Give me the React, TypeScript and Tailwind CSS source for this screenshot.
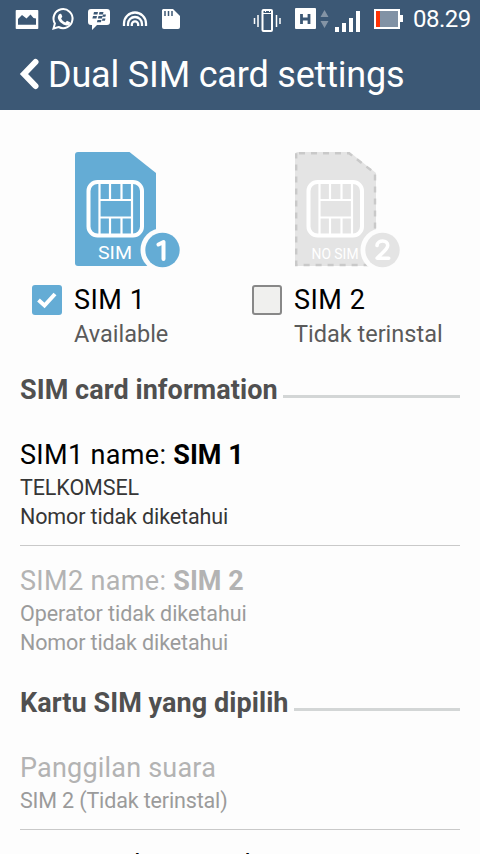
import type { ReactNode } from "react";

const statusIcons = (
  <svg width="190" height="38" viewBox="0 0 190 38" fill="#fff">
    <path fillRule="evenodd" d="M16.500 10h21q.8 0 .8.800v17.400q0 .8-.8.800h-21q-.8 0-.8-.8V10.800q0-.8.800-.8zM18 24.800h18V18.500l-2.500-.5-3-3.500-4 4-4.500-3.500-4 4z" />
    <path d="M53.500 28.500l1.400-5a9.500 9.500 0 1 1 3.700 3.500z" fill="none" stroke="#fff" strokeWidth="2" />
    <path d="M58.500 15c1.500-2 2.800-1.400 3.300.2l.5 1.500-1.200 1.700c1 2 2.400 3.200 4.300 4l1.600-1.600 3 1.500c.3 3-3 3.600-5.300 2.800-3.500-1.300-7-5-6.900-8z" />
    <path d="M91 9h16q3 0 3 3v10q0 3-3 3h-10l-5 5v-5h-1q-3 0-3-3V12q0-3 3-3z" />
    <g fill="#3c5875">
      <path d="M94 12h4l-.6 2.500h-4zM99.500 12h4l-.6 2.500h-4zM93 16h4l-.6 2.500h-4zM98.500 16h4l-.6 2.500h-4zM97.500 20h4l-.6 2.300h-4zM103 14.500h3l-.6 2.300h-3zM102.500 18.500h3l-.6 2.300h-3z" />
    </g>
    <g fill="none" stroke="#fff" strokeWidth="2.300">
      <path d="M124 26v-2.500a11 11 0 0 1 22 0V26M128 26v-2a7 7 0 0 1 14 0v2M131.800 26v-1.500a3.200 3.200 0 0 1 6.400 0V26" />
    </g>
    <path d="M163 9h10l7 7v11q0 2-2 2h-14q-2 0-2-2V10z" />
    <path d="M165 11v5M168.500 11v5M172 11v5" stroke="#3c5875" strokeWidth="1.500" />
  </svg>
);

const radioIcons = (
  <svg width="160" height="38" viewBox="250 0 160 38" fill="#fff">
    <rect x="262.500" y="10" width="9.500" height="21" rx="1" fill="none" stroke="#fff" strokeWidth="2" />
    <path d="M263 13.500h9M265.500 9v3M269.500 9v3" fill="none" stroke="#fff" />
    <path d="M254.500 18v6M258 15v12M276.500 15v12M280 18v6" stroke="#fff" strokeWidth="1.500" />
    <rect x="295" y="8" width="21" height="21" rx="1" />
    <path d="M301.500 14v10M309 14v10M301.500 19h7.500" stroke="#3c5875" strokeWidth="2.800" />
    <path d="M320.500 17l4-7 4 7zM320.500 21h8l-4 7z" fill="#8494a5" />
    <path d="M335 27h4v5h-4zM342 23h4v9h-4zM349 18h4v14h-4zM356 11h4v21h-4z" />
    <path d="M374 9h26v6h3v7h-3v7h-26z" />
    <path d="M376 11h22v16h-22z" fill="#8192a5" />
    <path d="M376 11h4v16h-4z" fill="#ff3305" />
  </svg>
);

type SimProps = { slot: 1 | 2; available?: boolean };

const SimCard = ({ slot, available }: SimProps) => {
  const color = available ? "#64acd5" : "#e4e4e4";

  return (
    <svg width="108" height="120" viewBox="0 0 108 120" className="block">
      <path d="M3 0h51.500l26.500 21v90q0 3-3 3H3q-3 0-3-3V3q0-3 3-3z" fill={color} />
      {!available && (
        <path
          d="M4 1.200h50l26 20V113H1.200V1.200"
          fill="none"
          stroke="#c9c9c9"
          strokeWidth="2.400"
          strokeDasharray="6 6"
        />
      )}
      <g fill="none" stroke="#fff">
        <rect x="13.500" y="30" width="53.500" height="53.500" rx="9" strokeWidth="4" />
        <path d="M24.500 31v51M57 31v51M24.500 48h32.500M24.500 65.500h32.500M35 31v17M46.500 31v17M35 65v17M46.500 65v17" strokeWidth="2.200" />
      </g>
      <text
        x={available ? 23 : 16.500}
        y="106.500"
        fill="#fff"
        className={available ? "font-[Roboto] text-[18px]" : "font-[Roboto] text-[15.5px]"}
        textLength={available ? 34 : 47}
        lengthAdjust="spacingAndGlyphs"
      >
        {available ? "SIM" : "NO SIM"}
      </text>
      <circle cx="87.500" cy="98" r="22" fill="#fdfdfd" />
      <circle cx="87.500" cy="98" r="17.200" fill={color} />
      {slot === 1 ? (
        <path d="M83.500 92.500l5-2.500V107" fill="none" stroke="#fff" strokeWidth="4" strokeLinecap="round" strokeLinejoin="round" />
      ) : (
        <path d="M82 93.500c.5-6 11-6 10.700 0 0 4-7 8.500-10.500 12.700h11.500" fill="none" stroke="#fff" strokeWidth="3.600" strokeLinecap="round" strokeLinejoin="round" />
      )}
    </svg>
  );
};

const SimSlot = ({ slot, available }: SimProps) => (
  <div className="w-[220px]">
    <div className="pl-[43px]">
      <SimCard slot={slot} available={available} />
    </div>
    <div className="mt-[12px] flex">
      {available ? (
        <div className="mt-[1px] flex size-[30px] items-center justify-center rounded-[3px] bg-[#64acd5]">
          <svg width="20" height="18" viewBox="0 0 20 18" fill="none" stroke="#fff" strokeWidth="4">
            <path d="M1.500 9l6 5.500L18 3" />
          </svg>
        </div>
      ) : (
        <div className="mt-[1px] size-[30px] rounded-[3px] border-2 border-[#888] bg-[#f0f0ee]" />
      )}
      <div className="ml-[12px]">
        <div className="text-[27px] leading-[32px] tracking-[0.5px] text-black">SIM {slot}</div>
        <div className="mt-[4px] text-[23.5px] leading-[28px] text-[#5a5a5a]">
          {available ? "Available" : "Tidak terinstal"}
        </div>
      </div>
    </div>
  </div>
);

const SectionTitle = ({ children }: { children: ReactNode }) => (
  <div className="flex h-[36px] items-center gap-[5px]">
    <h2 className="shrink-0 text-[27px] leading-[36px] font-bold tracking-[0.06px] text-[#505050]">{children}</h2>
    <div className="mt-[13px] h-[3px] flex-1 bg-[#d3d6d6]" />
  </div>
);

const App = () => {
  return (
    <div className="h-[854px] w-[480px] overflow-hidden bg-[#fdfdfd] font-['Roboto',sans-serif]">
      <header className="h-[110px] bg-[#3c5875] text-white">
        <div className="flex h-[38px] justify-between">
          {statusIcons}
          <div className="flex">
            {radioIcons}
            <div className="w-[70px] pl-[3px] text-[24px] leading-[38px] tracking-[-0.5px] whitespace-nowrap">08.29</div>
          </div>
        </div>
        <div className="flex h-[72px] items-center pl-[19px]">
          <svg width="24" height="34" viewBox="0 0 24 34" fill="none" stroke="#fff" strokeWidth="6" strokeLinecap="round">
            <path d="M16.500 5L5 17l11.500 12" />
          </svg>
          <h1 className="ml-[5px] pt-[2px] text-[36px] leading-[70px] tracking-[-0.18px] whitespace-nowrap">Dual SIM card settings</h1>
        </div>
      </header>

      <div className="flex pt-[42px] pl-[32px]">
        <SimSlot slot={1} available />
        <SimSlot slot={2} />
      </div>

      <main className="px-[20px] pt-[24px] whitespace-nowrap">
        <SectionTitle>SIM card information</SectionTitle>
        <div className="h-[138px] border-b border-[#c9c9c9] pt-[31px]">
          <div className="text-[27px] leading-[32px] tracking-[0.33px] text-black">
            SIM1 name: <b className="tracking-normal">SIM 1</b>
          </div>
          <div className="mt-[2px] text-[21.5px] leading-[29px] tracking-[-0.1px] text-[#363636]">TELKOMSEL</div>
          <div className="text-[21.5px] leading-[29px] tracking-[-0.13px] text-[#363636]">Nomor tidak diketahui</div>
        </div>
        <div className="pt-[19px] text-[#9b9b9b]">
          <div className="text-[27px] leading-[32px] tracking-[0.33px] text-[#b3b3b3]">
            SIM2 name: <b className="tracking-normal">SIM 2</b>
          </div>
          <div className="mt-[2px] text-[21.5px] leading-[29px] tracking-[-0.05px]">Operator tidak diketahui</div>
          <div className="text-[21.5px] leading-[29px] tracking-[-0.13px]">Nomor tidak diketahui</div>
        </div>
        <div className="mt-[28px]">
          <SectionTitle>Kartu SIM yang dipilih</SectionTitle>
        </div>
        <div className="h-[109px] border-b border-[#c9c9c9] pt-[31px]">
          <div className="text-[27px] leading-[32px] tracking-[0.2px] text-[#b3b3b3]">Panggilan suara</div>
          <div className="mt-[2px] text-[21.5px] leading-[29px] tracking-[-0.15px] text-[#9b9b9b]">SIM 2 (Tidak terinstal)</div>
        </div>
        <div className="pt-[19px] text-[27px] leading-[32px] tracking-[0.25px] text-black">Jaringan layanan data</div>
      </main>
    </div>
  );
};

export default App;
